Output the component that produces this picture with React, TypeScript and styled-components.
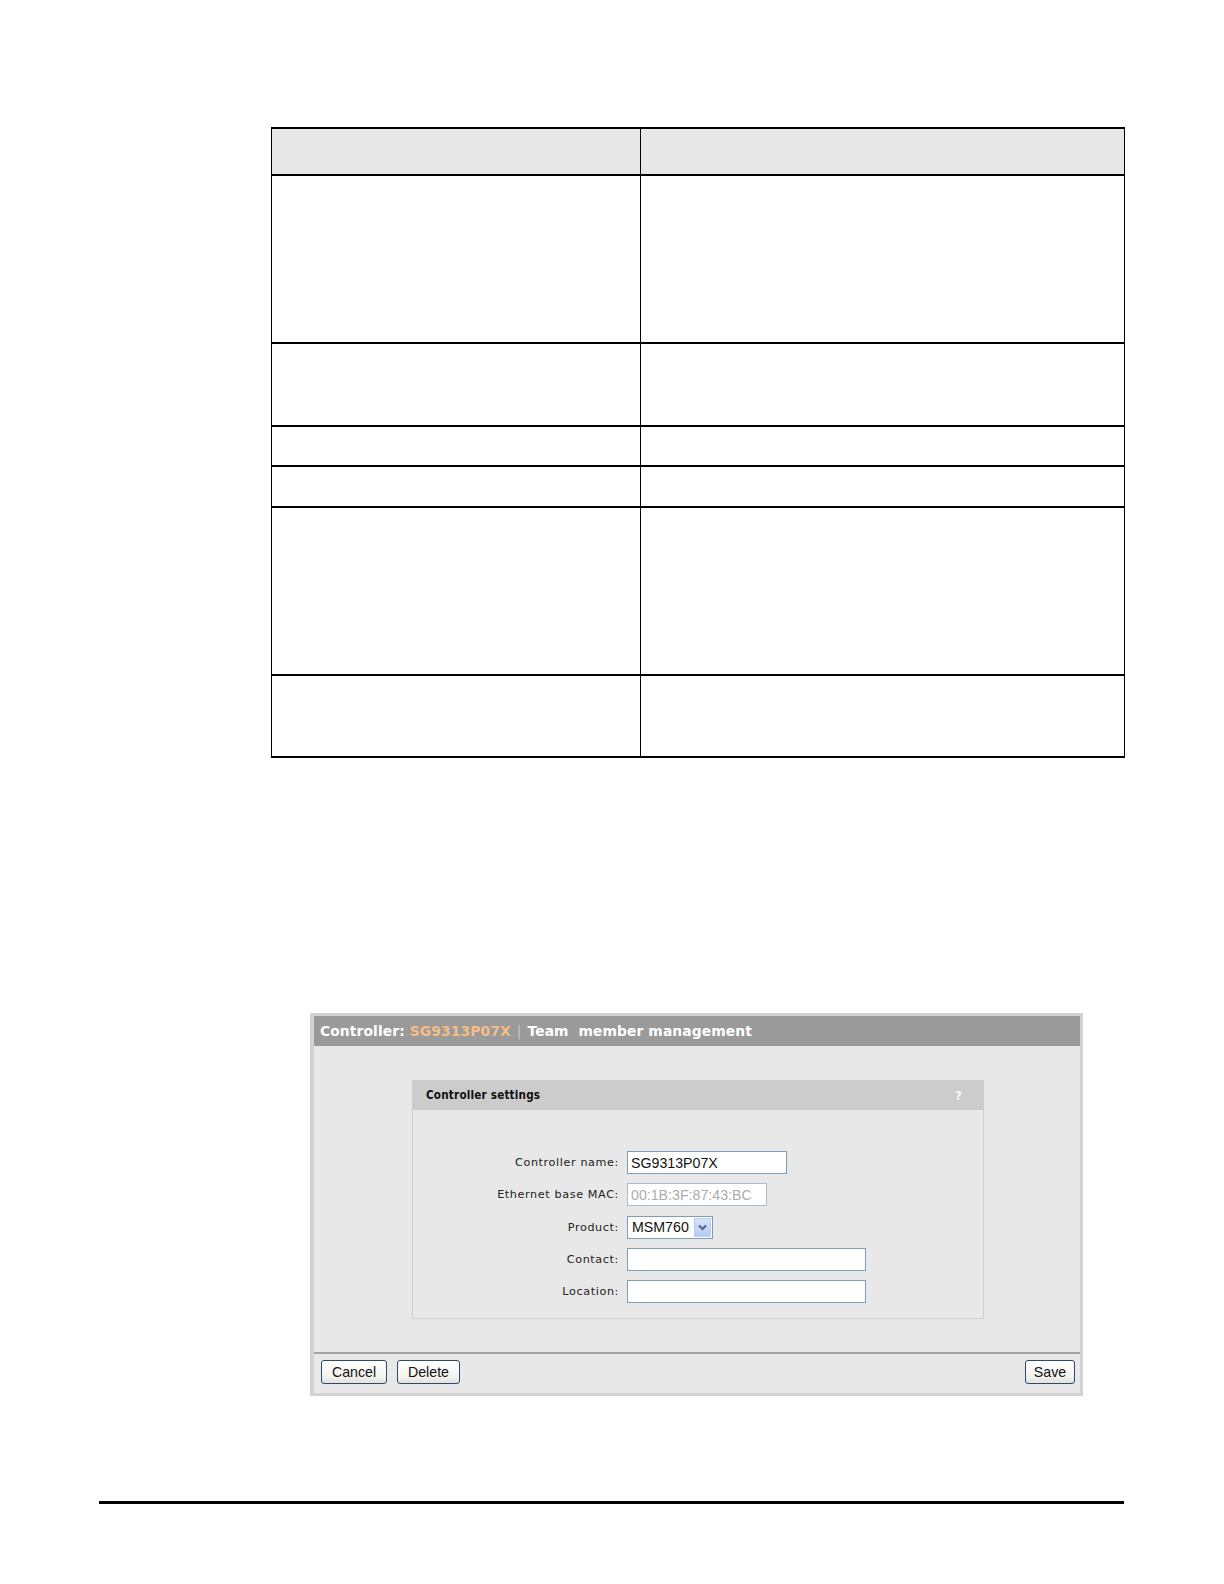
import React from "react";
import styled, { createGlobalStyle } from "styled-components";

const Global = createGlobalStyle`
  html, body { margin: 0; padding: 0; background: #ffffff; overflow: hidden; }
  body { font-family: "DejaVu Sans", Verdana, sans-serif; }
`;

const Page = styled.div`
  width: 1224px;
  box-sizing: border-box;
  padding-top: 127px;
  padding-bottom: 20px;
  display: flex;
  flex-direction: column;
`;

const Table = styled.table`
  margin-left: 271px;
  width: 854px;
  border-collapse: collapse;
  table-layout: fixed;
`;

const Cell = styled.td<{ $h: number; $head?: boolean }>`
  height: ${(p) => p.$h}px;
  padding: 0;
  box-sizing: border-box;
  background: ${(p) => (p.$head ? "#e7e7e7" : "#ffffff")};
  border-top: 2px solid #000;
  border-bottom: 2px solid #000;
  border-left: 1px solid #000;
  border-right: 1px solid #000;
`;

const Panel = styled.div`
  margin-top: 255px;
  margin-left: 310px;
  width: 773px;
  box-sizing: border-box;
  border: 3px solid #d2d2d2;
  border-left-width: 4px;
  background: #e8e8e8;
  display: flex;
  flex-direction: column;
`;

const TitleBar = styled.div`
  height: 30px;
  background: #9a9a9a;
  display: flex;
  align-items: center;
  padding-left: 6px;
  font-family: "DejaVu Sans", Verdana, sans-serif;
  font-weight: bold;
  font-size: 13.85px;
  color: #ffffff;
  letter-spacing: 0.1px;
  white-space: pre;
`;

const Orange = styled.span`
  color: #f6bd86;
`;

const Sep = styled.span`
  color: #c4c4c4;
  font-weight: normal;
  margin: 0 6px;
`;

const Body = styled.div`
  padding: 34px 0 33px 98px;
`;

const Box = styled.div`
  width: 572px;
  display: flex;
  flex-direction: column;
`;

const BoxHead = styled.div`
  height: 30px;
  background: #cccccc;
  display: flex;
  align-items: center;
  justify-content: space-between;
  padding: 0 22px 0 14px;
  font-family: "DejaVu Sans Condensed", "DejaVu Sans", sans-serif;
  font-weight: bold;
  font-size: 11.6px;
  letter-spacing: 0.2px;
  color: #111;
`;

const Help = styled.span`
  color: #fafafa;
  font-weight: bold;
  font-size: 13px;
`;

const BoxBody = styled.div`
  border: 1px solid #cfcfcf;
  border-top: none;
  height: 209px;
  box-sizing: border-box;
  padding-top: 41px;
  display: grid;
  grid-template-columns: 206px auto;
  grid-auto-rows: 23px;
  column-gap: 8px;
  row-gap: 9.3px;
  align-content: start;
`;

const Label = styled.label`
  justify-self: end;
  align-self: center;
  font-family: "DejaVu Sans", Verdana, sans-serif;
  font-size: 11.2px;
  letter-spacing: 0.62px;
  color: #222;
  white-space: nowrap;
`;

const Input = styled.div<{ $w: number; $disabled?: boolean }>`
  width: ${(p) => p.$w}px;
  height: 23px;
  box-sizing: border-box;
  border: 1px solid ${(p) => (p.$disabled ? "#a9bccf" : "#7f9db9")};
  background: #ffffff;
  display: flex;
  align-items: center;
  padding-left: 3px;
  font-family: "Liberation Sans", Arial, sans-serif;
  font-size: 14.2px;
  color: ${(p) => (p.$disabled ? "#acacac" : "#111")};
`;

const Select = styled.div`
  width: 86px;
  height: 23px;
  box-sizing: border-box;
  border: 1px solid #7f9db9;
  background: #fff;
  display: flex;
  align-items: center;
  justify-content: space-between;
  padding: 1px 1px 1px 4px;
  font-family: "Liberation Sans", Arial, sans-serif;
  font-size: 14.2px;
  color: #111;
`;

const DropBtn = styled.div`
  width: 17px;
  height: 19px;
  background: linear-gradient(#d6e2fb, #b7cbf6);
  border: 1px solid #bccdf0;
  box-sizing: border-box;
  display: flex;
  align-items: center;
  justify-content: center;
`;

const Footer = styled.div`
  border-top: 2px solid #a4a4a4;
  display: flex;
  align-items: flex-start;
  padding: 6px 5px 0 7px;
  box-sizing: border-box;
  height: 41px;
  gap: 10px;
`;

const Spacer = styled.div`
  flex: 1;
`;

const Button = styled.button<{ $w: number }>`
  width: ${(p) => p.$w}px;
  height: 24px;
  box-sizing: border-box;
  border: 1px solid #2c4a6e;
  border-radius: 3px;
  background: linear-gradient(#ffffff, #f3f3ef 70%, #e2e2dc);
  font-family: "Liberation Sans", Arial, sans-serif;
  font-size: 14.2px;
  color: #111;
  padding: 0;
  display: flex;
  align-items: center;
  justify-content: center;
`;

const Rule = styled.div`
  margin-top: 105px;
  margin-left: 99px;
  width: 1025px;
  height: 3px;
  background: #000;
`;

const rows = [47, 168, 83, 40, 41, 168, 82];

export default function App() {
  return (
    <>
      <Global />
      <Page>
        <Table>
          <colgroup>
            <col style={{ width: 369 }} />
            <col />
          </colgroup>
          <tbody>
            {rows.map((h, i) => (
              <tr key={i}>
                <Cell $h={h} $head={i === 0} />
                <Cell $h={h} $head={i === 0} />
              </tr>
            ))}
          </tbody>
        </Table>

        <Panel>
          <TitleBar>
            Controller: <Orange>SG9313P07X</Orange>
            <Sep>|</Sep>Team  member management
          </TitleBar>
          <Body>
            <Box>
              <BoxHead>
                <span>Controller settings</span>
                <Help>?</Help>
              </BoxHead>
              <BoxBody>
                <Label>Controller name:</Label>
                <Input $w={160}>SG9313P07X</Input>
                <Label>Ethernet base MAC:</Label>
                <Input $w={140} $disabled>
                  00:1B:3F:87:43:BC
                </Input>
                <Label>Product:</Label>
                <Select>
                  <span>MSM760</span>
                  <DropBtn>
                    <svg width="9" height="7" viewBox="0 0 9 7">
                      <path d="M1 1.5 L4.5 5 L8 1.5" stroke="#4d6185" strokeWidth="2" fill="none" />
                    </svg>
                  </DropBtn>
                </Select>
                <Label>Contact:</Label>
                <Input $w={239} />
                <Label>Location:</Label>
                <Input $w={239} />
              </BoxBody>
            </Box>
          </Body>
          <Footer>
            <Button $w={66}>Cancel</Button>
            <Button $w={63}>Delete</Button>
            <Spacer />
            <Button $w={50}>Save</Button>
          </Footer>
        </Panel>
        <Rule />
      </Page>
    </>
  );
}
